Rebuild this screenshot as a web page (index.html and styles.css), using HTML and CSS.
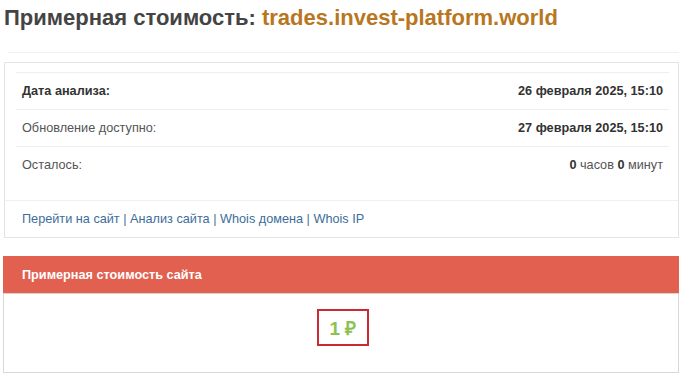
FILE: index.html
```html
<!DOCTYPE html>
<html lang="ru">
<head>
<meta charset="utf-8">
<title>Примерная стоимость</title>
<link rel="stylesheet" href="styles.css">
</head>
<body>
<div class="page">
  <h1 class="title">Примерная стоимость: <span class="domain">trades.invest-platform.world</span></h1>
  <div class="rule"></div>
  <div class="card info">
    <div class="rows">
      <div class="row"><span class="label strong">Дата анализа:</span><span class="value strong">26 февраля 2025, 15:10</span></div>
      <div class="row"><span class="label">Обновление доступно:</span><span class="value strong">27 февраля 2025, 15:10</span></div>
      <div class="row"><span class="label">Осталось:</span><span class="value"><b>0</b> часов <b>0</b> минут</span></div>
    </div>
    <div class="links">
      <a href="#">Перейти на сайт</a>&nbsp;|&nbsp;<a href="#">Анализ сайта</a>&nbsp;|&nbsp;<a href="#">Whois домена</a>&nbsp;|&nbsp;<a href="#">Whois IP</a>
    </div>
  </div>
  <div class="card price">
    <div class="price-head">Примерная стоимость сайта</div>
    <div class="price-body">
      <div class="price-box">1 ₽</div>
    </div>
  </div>
</div>
</body>
</html>
```
FILE: styles.css
```css
html, body {
  margin: 0;
  padding: 0;
  background: #fff;
}
body {
  font-family: "Liberation Sans", Arial, sans-serif;
  color: #444;
}
.page {
  padding: 0 2px 0 3px;
}
.title {
  margin: 0;
  padding-left: 1px;
  font-size: 22px;
  font-weight: bold;
  line-height: 36px;
  color: #444;
}
.domain {
  color: #b87620;
}
.rule {
  margin: 16px 0 0 5px;
  border-top: 1px solid #f0f0f0;
}
.card {
  border: 1px solid #e4e4e4;
}
.info {
  margin: 9px 0 0 1px;
  padding: 9px 9px 0 11px;
}
.rows {
  display: flex;
  flex-direction: column;
}
.row {
  display: flex;
  justify-content: space-between;
  align-items: center;
  height: 36px;
  border-top: 1px solid #eeeeee;
  padding: 0 6px 0 6px;
  font-size: 12.7px;
  color: #555;
}
.strong {
  font-weight: bold;
  color: #333;
}
.value b {
  color: #333;
}
.links {
  margin: 17px -9px 0 -11px;
  border-top: 1px solid #f0f0f0;
  height: 36px;
  padding-left: 17px;
  display: flex;
  align-items: center;
  font-size: 12.7px;
  color: #4b6f95;
}
.links a {
  color: #3d6d9b;
  text-decoration: none;
}
.price {
  margin-top: 18px;
  border-color: #dcd6d6;
}
.price-head {
  height: 37px;
  margin: -1px -1px 0 -1px;
  background: #e2604f;
  color: #fff;
  font-size: 12.7px;
  font-weight: bold;
  display: flex;
  align-items: center;
  padding-left: 19px;
  border-bottom: 1px solid #d9d0d0;
}
.price-body {
  display: flex;
  justify-content: center;
  padding: 15px 0 26px;
}
.price-box {
  width: 48px;
  height: 33px;
  border: 2px solid #cc2a33;
  display: flex;
  align-items: center;
  justify-content: center;
  color: #8cc152;
  font-size: 19px;
  font-weight: bold;
  margin-left: 4px;
}
```
